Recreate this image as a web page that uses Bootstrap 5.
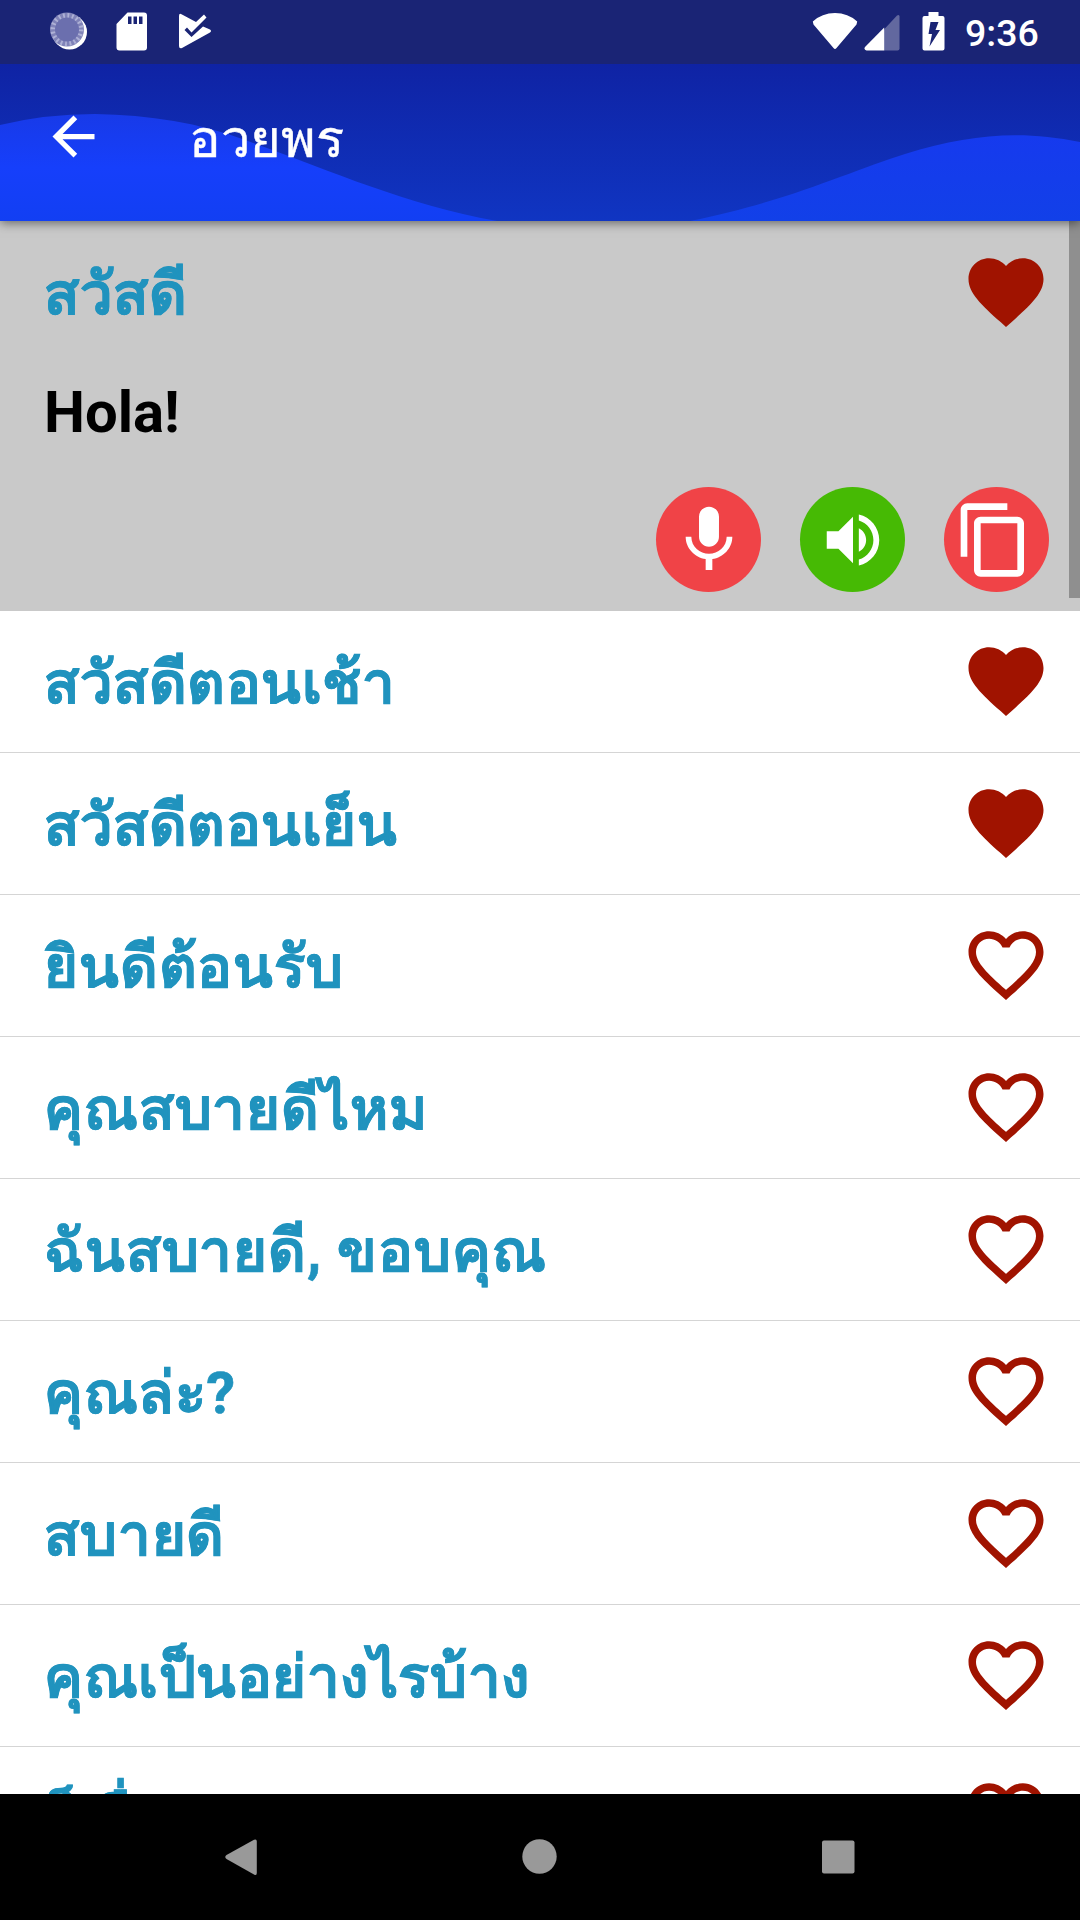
<!DOCTYPE html>
<html lang="th">
<head>
<meta charset="utf-8">
<meta name="viewport" content="width=device-width, initial-scale=1">
<title>อวยพร</title>
<link href="https://cdn.jsdelivr.net/npm/bootstrap@5.3.0/dist/css/bootstrap.min.css" rel="stylesheet">
<style>
body{font-family:Roboto,"Droid Sans Thai","DejaVu Sans",sans-serif;background:#fff}
svg{display:block;flex:none}
.screen{width:1080px;height:1920px}
.statusbar{height:64px;background:#1a2475;padding:12px 43px 0 50px;z-index:4}
.clock{font-size:37.5px;font-weight:500;line-height:42px;margin-left:20px;width:72px}
.appbar{height:157px;z-index:3;padding-left:42px;box-shadow:0 2px 10px rgba(0,0,0,.5)}
.wave{left:0;top:0}
.page-title{font-size:52.5px;line-height:64px;margin:0 0 8px 84px;font-weight:400;-webkit-text-stroke:.4px currentColor}
.phrases{min-height:0}
.phrase{height:142px;padding:0 29px 0 44px;border-bottom:1px solid #d5d5d5}
.phrase-text{font-size:58px;line-height:70px;padding-top:3px;font-weight:700;color:#2093be;white-space:nowrap;letter-spacing:.55px;-webkit-text-stroke:.6px currentColor}
.wider{letter-spacing:.85px}
.opened{height:390px;background:#c9c9c9;padding:0 29px 0 44px}
.opened-head{height:142px}
.translation{font-size:58px;line-height:70px;padding-top:14px;font-weight:700;color:#000}
.opened-actions{gap:39px;margin-top:40px;margin-right:2px}
.round-btn{width:105px;height:105px;border-radius:50%;color:#fff}
.c-red{background:#f04347}.c-green{background:#46ba04}
.heart{color:#a01300;margin-bottom:1px}
.thumb{right:0;top:0;width:11px;height:377px;background:#8f8f8f}
.navbtns{height:126px;background:#000;z-index:4}
</style>
<script src="https://cdn.jsdelivr.net/npm/bootstrap@5.3.0/dist/js/bootstrap.bundle.min.js"></script>
</head>
<body>
<svg width="0" height="0" class="position-absolute">
  <defs>
    <symbol id="fav" viewBox="0 0 24 24"><path fill="currentColor" d="M12 21.35l-1.45-1.32C5.4 15.36 2 12.28 2 8.5 2 5.42 4.42 3 7.5 3c1.74 0 3.41.81 4.5 2.09C13.09 3.81 14.76 3 16.5 3 19.58 3 22 5.42 22 8.5c0 3.78-3.4 6.86-8.55 11.54L12 21.35z"/></symbol>
    <symbol id="fav-o" viewBox="0 0 24 24"><path fill="currentColor" d="M16.5 3c-1.74 0-3.41.81-4.5 2.09C10.91 3.81 9.24 3 7.5 3 4.42 3 2 5.42 2 8.5c0 3.78 3.4 6.86 8.55 11.54L12 21.35l1.45-1.32C18.6 15.36 22 12.28 22 8.5 22 5.42 19.58 3 16.5 3zm-4.4 15.55l-.1.1-.1-.1C7.14 14.24 4 11.39 4 8.5 4 6.5 5.5 5 7.5 5c1.54 0 3.04.99 3.57 2.36h1.87C13.46 5.99 14.96 5 16.5 5c2 0 3.5 1.5 3.5 3.5 0 2.89-3.14 5.74-7.9 10.05z"/></symbol>
  </defs>
</svg>
<div class="screen d-flex flex-column overflow-hidden position-relative">
  <div class="statusbar flex-shrink-0 d-flex align-items-start text-white">
    <svg width="38" height="39" viewBox="0 0 38 39"><circle cx="19.500" cy="20" r="17.500" fill="#fff"/><circle cx="17" cy="17.500" r="17" fill="#8083b8"/><circle cx="17" cy="17.500" r="14" fill="none" stroke="#aeb1d6" stroke-width="5" stroke-dasharray="1.800 2.600"/><circle cx="17" cy="17.500" r="12" fill="#6b6fae"/></svg>
    <svg width="32" height="39" viewBox="0 0 32 39" style="margin-left:28px"><path fill="#fff" fill-rule="evenodd" d="M11.500.500H28a3 3 0 0 1 3 3V35.500a3 3 0 0 1-3 3H3.500a3 3 0 0 1-3-3V12zM12 4.500v7.500h3.500V4.500zM17.500 4.500v7.500H21V4.500zM23 4.500v7.500h3.500V4.500z"/></svg>
    <svg width="34" height="38" viewBox="0 0 34 38" style="margin-left:31px"><path fill="#fff" d="M0 4Q0 1 2.500 2.200L17 10 25 2.500 27.500 5.500 12.500 20.500 8 15.500 5.500 18 12.500 25 24 14.500 31 17.500Q33 19 31 20.500L3 36Q0 37 0 34z"/></svg>
    <svg class="ms-auto" width="46" height="38" viewBox="0 0 46 38"><path fill="#fff" d="M.8 9.500Q10 1 23 1T45.200 9.500L44.500 12.500 24.500 36Q23 37.800 21.500 36L1.500 12.500z"/></svg>
    <svg width="36" height="39" viewBox="0 0 36 39" style="margin-left:6.500px"><path fill="#62689f" d="M20 17.500 33 3.500Q35.500 2 35.500 4.500V36.500a2 2 0 0 1-2 2H20z"/><path fill="#fff" d="M20.200 15.500V38.500H2.500Q-.5 37.500 1 35z"/></svg>
    <svg width="23" height="39" viewBox="0 0 23 39" style="margin-left:22px"><path fill="#fff" fill-rule="evenodd" d="M6.500 0H16.500V4H20.500a2 2 0 0 1 2 2V36.500a2 2 0 0 1-2 2H2.500a2 2 0 0 1-2-2V6a2 2 0 0 1 2-2H6.500zM8.500 10 6.500 22H10L7.500 34.500 18 18H13.500L16.500 10z"/></svg>
    <span class="clock">9:36</span>
  </div>
  <header class="appbar flex-shrink-0 d-flex align-items-center text-white position-relative">
    <svg class="wave position-absolute" width="1080" height="157" viewBox="0 64 1080 157">
      <defs>
        <linearGradient id="g1" x1="0" y1="0" x2="0" y2="1"><stop offset="0" stop-color="#0f23a4"/><stop offset="1" stop-color="#1035c2"/></linearGradient>
        <linearGradient id="g2" x1="0" y1="0" x2="0" y2="1"><stop offset="0" stop-color="#183ae8"/><stop offset=".5" stop-color="#163ffb"/><stop offset="1" stop-color="#123ff3"/></linearGradient>
        <linearGradient id="g3" x1="0" y1="0" x2="0" y2="1"><stop offset="0" stop-color="#163aee"/><stop offset="1" stop-color="#1240e8"/></linearGradient>
      </defs>
      <rect y="64" width="1080" height="157" fill="url(#g1)"/>
      <path fill="url(#g2)" d="M0 125Q45 114 95 114C150 115 200 123 245 140 330 170 400 203 497 221H0z"/>
      <path fill="url(#g3)" d="M690 221C790 201 850 171 905 154 970 134 1020 130 1080 142V221z"/>
    </svg>
    <svg class="position-relative" width="63" height="63" viewBox="0 0 24 24" style="margin-top:-12px"><path fill="#fff" d="M20 11H7.830l5.590-5.590L12 4l-8 8 8 8 1.410-1.410L7.830 13H20v-2z"/></svg>
    <h1 class="page-title position-relative">อวยพร</h1>
  </header>
  <main class="phrases flex-grow-1 overflow-hidden position-relative">
    <section class="opened">
      <div class="opened-head d-flex align-items-center justify-content-between">
        <span class="phrase-text">สวัสดี</span>
        <svg class="heart" width="90" height="90"><use href="#fav"/></svg>
      </div>
      <div class="translation">Hola!</div>
      <div class="opened-actions d-flex justify-content-end">
        <div class="round-btn c-red d-flex align-items-center justify-content-center"><svg width="80" height="80" viewBox="0 0 24 24"><path fill="#fff" d="M12 14c1.660 0 2.990-1.340 2.990-3L15 5c0-1.660-1.340-3-3-3S9 3.340 9 5v6c0 1.660 1.340 3 3 3zm5.300-3c0 3-2.540 5.100-5.300 5.100S6.700 14 6.700 11H5c0 3.410 2.720 6.230 6 6.720V21h2v-3.280c3.280-.48 6-3.300 6-6.720h-1.700z"/></svg></div>
        <div class="round-btn c-green d-flex align-items-center justify-content-center"><svg width="70" height="70" viewBox="0 0 24 24"><path fill="#fff" d="M3 9v6h4l5 5V4L7 9H3zm13.500 3c0-1.770-1.020-3.290-2.500-4.030v8.050c1.480-.73 2.500-2.250 2.500-4.020zM14 3.230v2.060c2.890.86 5 3.540 5 6.710s-2.110 5.850-5 6.710v2.060c4.010-.91 7-4.490 7-8.770s-2.990-7.860-7-8.770z"/></svg></div>
        <div class="round-btn c-red d-flex align-items-center justify-content-center"><svg width="80" height="80" viewBox="0 0 24 24" style="margin-right:5px"><path fill="#fff" d="M16 1H4c-1.100 0-2 .9-2 2v14h2V3h12V1zm3 4H8c-1.100 0-2 .9-2 2v14c0 1.100.9 2 2 2h11c1.100 0 2-.9 2-2V7c0-1.100-.9-2-2-2zm0 16H8V7h11v14z"/></svg></div>
      </div>
    </section>
    <div class="phrase d-flex align-items-center justify-content-between"><span class="phrase-text">สวัสดีตอนเช้า</span><svg class="heart" width="90" height="90"><use href="#fav"/></svg></div>
    <div class="phrase d-flex align-items-center justify-content-between"><span class="phrase-text">สวัสดีตอนเย็น</span><svg class="heart" width="90" height="90"><use href="#fav"/></svg></div>
    <div class="phrase d-flex align-items-center justify-content-between"><span class="phrase-text wider">ยินดีต้อนรับ</span><svg class="heart" width="90" height="90"><use href="#fav-o"/></svg></div>
    <div class="phrase d-flex align-items-center justify-content-between"><span class="phrase-text wider">คุณสบายดีไหม</span><svg class="heart" width="90" height="90"><use href="#fav-o"/></svg></div>
    <div class="phrase d-flex align-items-center justify-content-between"><span class="phrase-text wider">ฉันสบายดี, ขอบคุณ</span><svg class="heart" width="90" height="90"><use href="#fav-o"/></svg></div>
    <div class="phrase d-flex align-items-center justify-content-between"><span class="phrase-text">คุณล่ะ?</span><svg class="heart" width="90" height="90"><use href="#fav-o"/></svg></div>
    <div class="phrase d-flex align-items-center justify-content-between"><span class="phrase-text wider">สบายดี</span><svg class="heart" width="90" height="90"><use href="#fav-o"/></svg></div>
    <div class="phrase d-flex align-items-center justify-content-between"><span class="phrase-text">คุณเป็นอย่างไรบ้าง</span><svg class="heart" width="90" height="90"><use href="#fav-o"/></svg></div>
    <div class="phrase d-flex align-items-center justify-content-between"><span class="phrase-text">ก็เรื่อยๆ</span><svg class="heart" width="90" height="90"><use href="#fav-o"/></svg></div>
    <div class="thumb position-absolute"></div>
  </main>
  <nav class="navbtns flex-shrink-0 d-flex align-items-center justify-content-center">
    <svg width="1080" height="126" viewBox="0 1794 1080 126" fill="#999"><path d="M226.500 1855 254 1839.800Q256.800 1838.500 256.800 1841.500V1873Q256.800 1876 254 1874.500L226.500 1859Q224 1857 226.500 1855z"/><circle cx="539.500" cy="1856.500" r="17.200"/><rect x="822" y="1840.500" width="32.500" height="33" rx="2"/></svg>
  </nav>
</div>
</body>
</html>
